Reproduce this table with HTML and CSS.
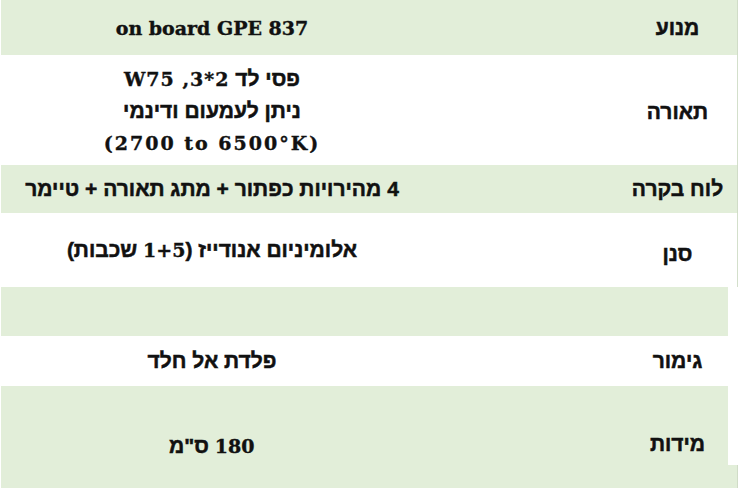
FILE: index.html
```html
<!DOCTYPE html>
<html lang="he" dir="rtl">
<head>
<meta charset="utf-8">
<link rel="stylesheet" href="styles.css">
</head>
<body>
<div class="wrap">
<table class="specs">
  <tbody>
    <tr class="r1 green"><th>מנוע</th><td><span class="lat ltr">on board GPE 837</span></td></tr>
    <tr class="r2"><th>תאורה</th><td>פסי לד <span class="lat wide">2*3, W75</span><br>ניתן לעמעום ודינמי<br><span class="lat ltr wider">(2700 to 6500°K)</span></td></tr>
    <tr class="r3 green"><th>לוח בקרה</th><td>4 מהירויות כפתור + מתג תאורה + טיימר</td></tr>
    <tr class="r4"><th>סנן</th><td>אלומיניום אנודייז (<span class="lat">1+5</span> שכבות)</td></tr>
    <tr class="r5 green"><th></th><td></td></tr>
    <tr class="r6"><th>גימור</th><td>פלדת אל חלד</td></tr>
    <tr class="r7 green"><th>מידות</th><td><span class="lat">180</span> ס"מ</td></tr>
  </tbody>
</table>
<div class="edge"></div>
</div>
</body>
</html>
```
FILE: styles.css
```css
html, body {
  margin: 0;
  padding: 0;
  background: #ffffff;
  overflow: hidden;
}
.wrap {
  position: relative;
  width: 738px;
}
.specs {
  width: 738px;
  border-collapse: collapse;
  table-layout: fixed;
  color: #111111;
}
.specs th, .specs td {
  padding: 0;
  vertical-align: middle;
  text-align: center;
  font-weight: bold;
  font-family: "Liberation Sans", "DejaVu Sans", sans-serif;
  font-size: 21px;
  -webkit-text-stroke: 0.5px #111111;
}
.specs th {
  width: 119px;
  padding-left: 86px;
  border-right: 1px solid #d3dfcb;
}
.specs td {
  padding-right: 109px;
  line-height: 32px;
}
.specs .lat {
  font-family: "DejaVu Serif", "Liberation Serif", serif;
  font-size: 19px;
  -webkit-text-stroke: 0.4px #111111;
}
.specs .wide {
  letter-spacing: 1px;
}
.specs .wider {
  letter-spacing: 2px;
}
.specs .ltr {
  direction: ltr;
  unicode-bidi: isolate;
}
.specs tr.green th, .specs tr.green td {
  background: #e2eed9;
}
.specs tr.green th {
  border-right-color: #d0dcc7;
}
.r1 { height: 55px; }
.r2 { height: 110px; }
.r2 td { padding-top: 2px; }
.r2 th { padding-top: 4px; }
.r3 { height: 48px; }
.r4 { height: 74px; }
.r5 { height: 49px; }
.r6 { height: 50px; }
.r7 { height: 120px; }
.r7 th, .r7 td { vertical-align: top; padding-top: 44px; }
.r7 th { padding-top: 46px; }
.r4 th { padding-top: 8px; }
.edge {
  position: absolute;
  right: 0;
  top: 287px;
  width: 10px;
  height: 178px;
  background: #ffffff;
}
```
